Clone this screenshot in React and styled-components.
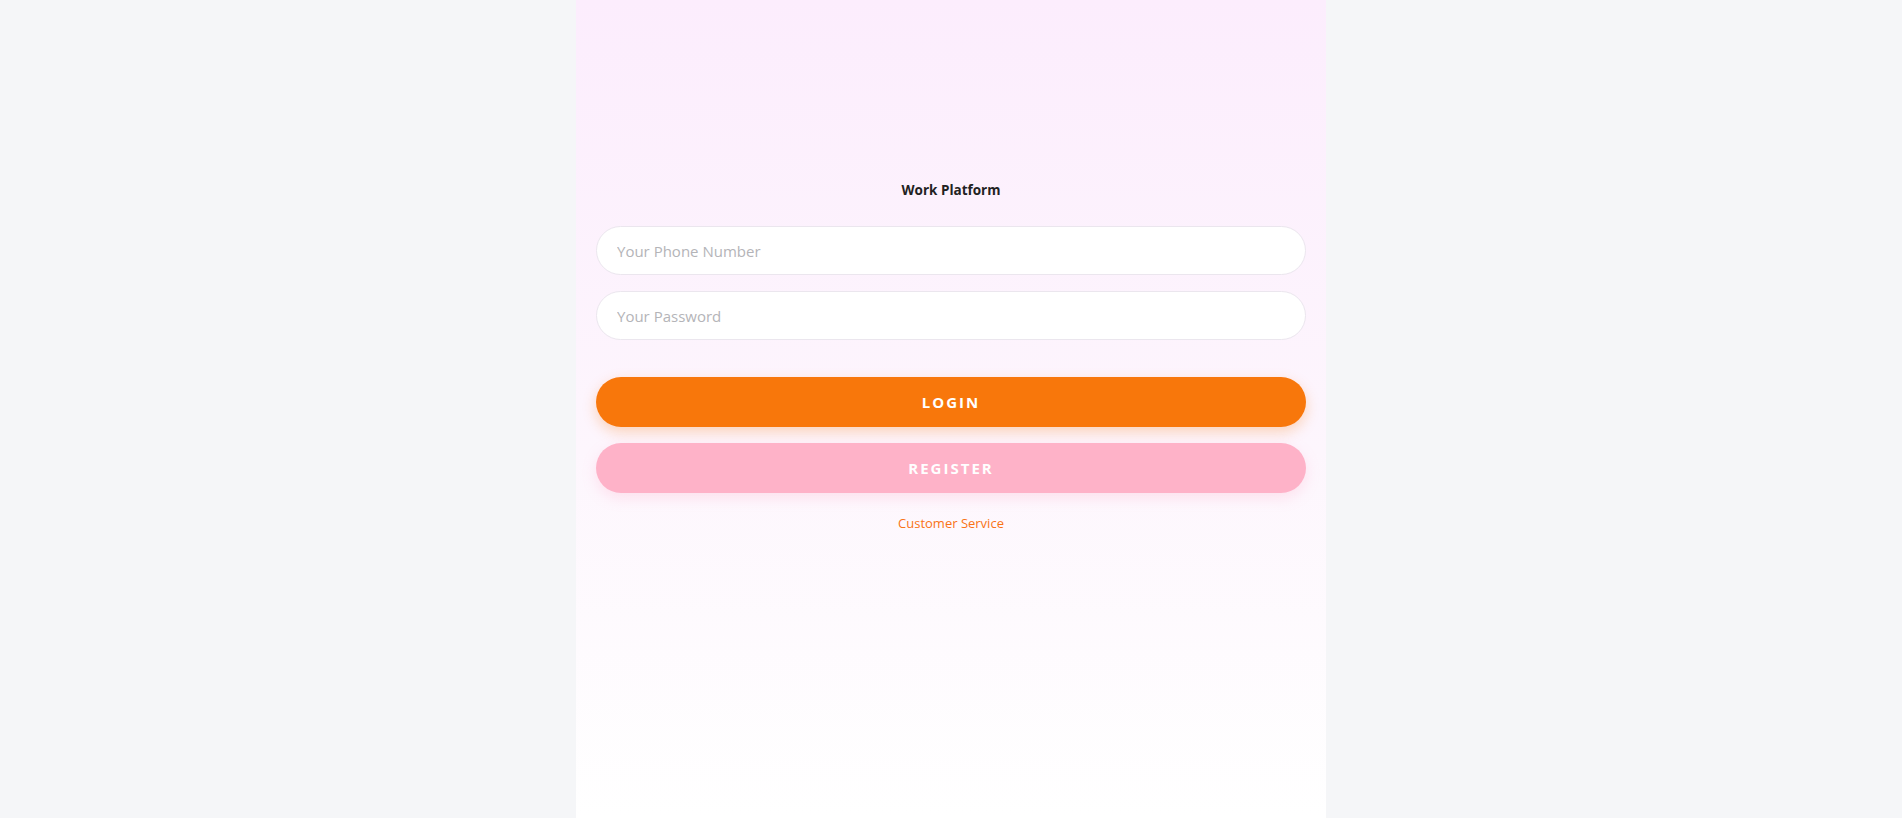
import styled, { createGlobalStyle } from 'styled-components';

const GlobalStyle = createGlobalStyle`
    html, body {
        margin: 0;
        padding: 0;
        background: #f5f6f8;
        font-family: 'Open Sans', 'Noto Sans', sans-serif;
    }
    * {
        box-sizing: border-box;
    }
`

const Page = styled.div`
    display: flex;
    justify-content: center;
    min-height: 100vh;
`

const Panel = styled.div`
    width: 750px;
    min-height: 100vh;
    background: linear-gradient(180deg, #fcedfd 0%, #fdf6fd 55%, #ffffff 100%);
    padding: 180px 20px 40px;
    display: flex;
    flex-direction: column;
`

const Title = styled.h1`
    margin: 0 0 26px;
    font-size: 13.5px;
    line-height: 20px;
    font-weight: 700;
    color: #222222;
    text-align: center;
`

const Input = styled.input`
    display: block;
    width: 100%;
    height: 49px;
    margin-bottom: 16px;
    padding: 0 20px;
    border: 1px solid #ebe6ee;
    border-radius: 25px;
    background: #ffffff;
    font-family: inherit;
    font-size: 15px;
    color: #333333;
    outline: none;

    &::placeholder {
        color: #b4b4b8;
    }
`

const Button = styled.button`
    display: block;
    width: 100%;
    height: 50px;
    margin-top: ${props => props.$first ? '21px' : '16px'};
    border: none;
    border-radius: 25px;
    background: ${props => props.$color};
    box-shadow: 0 5px 14px ${props => props.$shadow};
    color: #ffffff;
    font-family: inherit;
    font-size: 15px;
    font-weight: 700;
    letter-spacing: 2px;
    cursor: pointer;
`

const ServiceLink = styled.a`
    display: block;
    margin-top: 20px;
    text-align: center;
    font-size: 13px;
    line-height: 20px;
    color: #f97316;
    text-decoration: none;
    cursor: pointer;
`

const App = () => {
    return (
        <Page>
            <GlobalStyle />
            <Panel>
                <Title>Work Platform</Title>
                <Input type="tel" placeholder="Your Phone Number" />
                <Input type="password" placeholder="Your Password" />
                <Button $first $color="#f8770b" $shadow="rgba(248, 119, 11, 0.28)">LOGIN</Button>
                <Button $color="#feb2c8" $shadow="rgba(254, 160, 190, 0.25)">REGISTER</Button>
                <ServiceLink>Customer Service</ServiceLink>
            </Panel>
        </Page>
    );
}

export default App;
